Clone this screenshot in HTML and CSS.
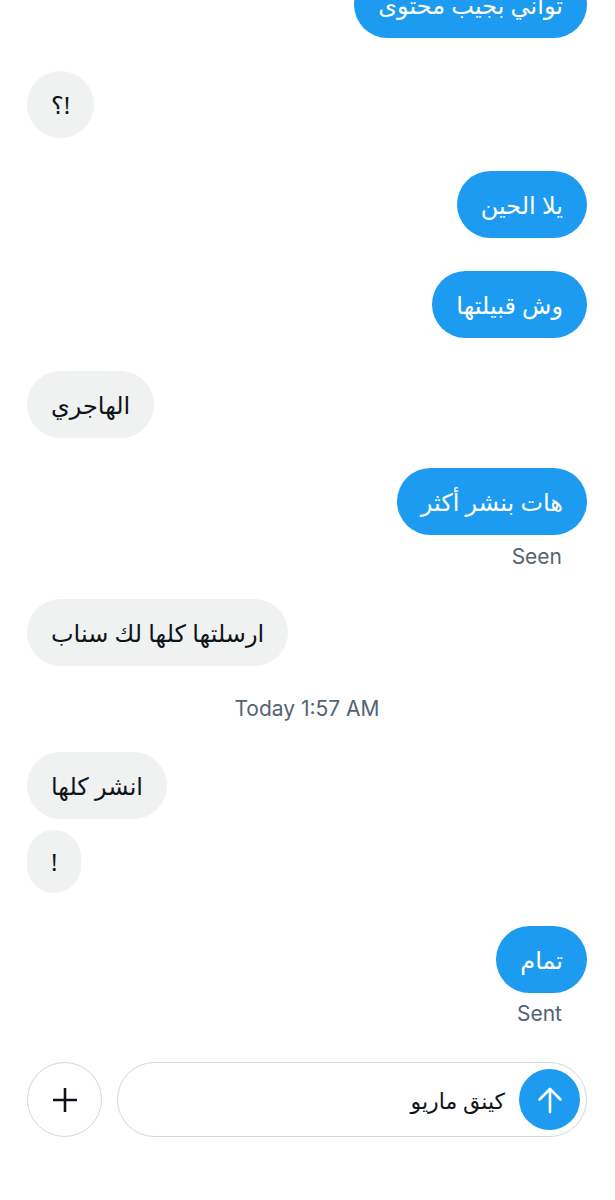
FILE: index.html
```html
<!DOCTYPE html>
<html lang="ar">
<head>
    <meta charset="UTF-8">
    <meta name="viewport" content="width=device-width, initial-scale=1.0">
    <title>Messages</title>
    <link rel="stylesheet" href="styles.css">
</head>
<body>
    <div class="thread">
        <div class="msg sent first"><span dir="rtl">تواني بجيب محتوى</span></div>
        <div class="msg recv"><span dir="rtl">!؟</span></div>
        <div class="msg sent"><span dir="rtl">يلا الحين</span></div>
        <div class="msg sent"><span dir="rtl">وش قبيلتها</span></div>
        <div class="msg recv"><span dir="rtl">الهاجري</span></div>
        <div class="msg sent tight"><span dir="rtl">هات بنشر أكثر</span></div>
        <div class="status">Seen</div>
        <div class="msg recv after-status"><span dir="rtl">ارسلتها كلها لك سناب</span></div>
        <div class="stamp">Today 1:57 AM</div>
        <div class="msg recv after-stamp"><span dir="rtl">انشر كلها</span></div>
        <div class="msg recv same short"><span>!</span></div>
        <div class="msg sent"><span dir="rtl">تمام</span></div>
        <div class="status sent-status">Sent</div>
    </div>

    <div class="composer">
        <button class="add-btn" aria-label="Add">
            <svg width="28" height="28" viewBox="0 0 28 28">
                <path d="M14 2v24M2 14h24" stroke="#0f1419" stroke-width="2.6" fill="none"/>
            </svg>
        </button>
        <div class="input-box">
            <span class="input-text" dir="rtl">كينق ماريو</span>
            <button class="send-btn" aria-label="Send">
                <svg width="30" height="30" viewBox="0 0 30 30">
                    <path d="M15 27V4M4.5 14.5L15 4l10.5 10.5" stroke="#fff" stroke-width="2.6" fill="none" stroke-linecap="round" stroke-linejoin="round"/>
                </svg>
            </button>
        </div>
    </div>
</body>
</html>
```

FILE: styles.css
```css
body {
    margin: 0;
    background: #fff;
    font-family: "Noto Sans", "DejaVu Sans", sans-serif;
    color: #0f1419;
    overflow: hidden;
}

.thread {
    display: flex;
    flex-direction: column;
    padding: 0 28px 0 27px;
}

.msg {
    height: 67px;
    box-sizing: border-box;
    padding: 0 24px;
    border-radius: 34px;
    display: flex;
    align-items: center;
    font-size: 24px;
    margin-top: 33px;
}

.msg.first {
    margin-top: -29px;
}

.msg.tight {
    margin-top: 30px;
}

.sent {
    align-self: flex-end;
    background-color: #1d9bf0;
    color: #fff;
}

.recv {
    align-self: flex-start;
    background-color: #f0f1f1;
    color: #0f1419;
}

.msg.after-status {
    margin-top: 30px;
}

.msg.after-stamp {
    margin-top: 31px;
}

.msg.same {
    margin-top: 11px;
}

.msg.short {
    height: 63px;
    padding: 0 24px;
}

.status {
    align-self: flex-end;
    margin: 10px 25px 0 0;
    font-family: Inter, "Noto Sans", sans-serif;
    font-size: 21px;
    line-height: 24px;
    color: #536471;
}

.sent-status {
    margin-top: 9px;
}

.stamp {
    align-self: center;
    margin-top: 31px;
    font-family: Inter, "Noto Sans", sans-serif;
    font-size: 21px;
    line-height: 24px;
    color: #536471;
}

.composer {
    display: flex;
    align-items: center;
    gap: 15px;
    padding: 0 28px 0 27px;
    margin-top: 36px;
}

.add-btn {
    width: 75px;
    height: 75px;
    flex: none;
    border: 1px solid #cfd9de;
    border-radius: 50%;
    background: #fff;
    display: flex;
    align-items: center;
    justify-content: center;
    padding: 0;
}

.input-box {
    flex: 1;
    height: 75px;
    box-sizing: border-box;
    border: 1px solid #cfd9de;
    border-radius: 38px;
    display: flex;
    align-items: center;
    justify-content: flex-end;
    padding-right: 6px;
    gap: 14px;
}

.input-text {
    font-size: 22px;
    color: #0f1419;
}

.send-btn {
    width: 61px;
    height: 61px;
    border: none;
    border-radius: 50%;
    background-color: #1d9bf0;
    display: flex;
    align-items: center;
    justify-content: center;
    padding: 0;
}
```
